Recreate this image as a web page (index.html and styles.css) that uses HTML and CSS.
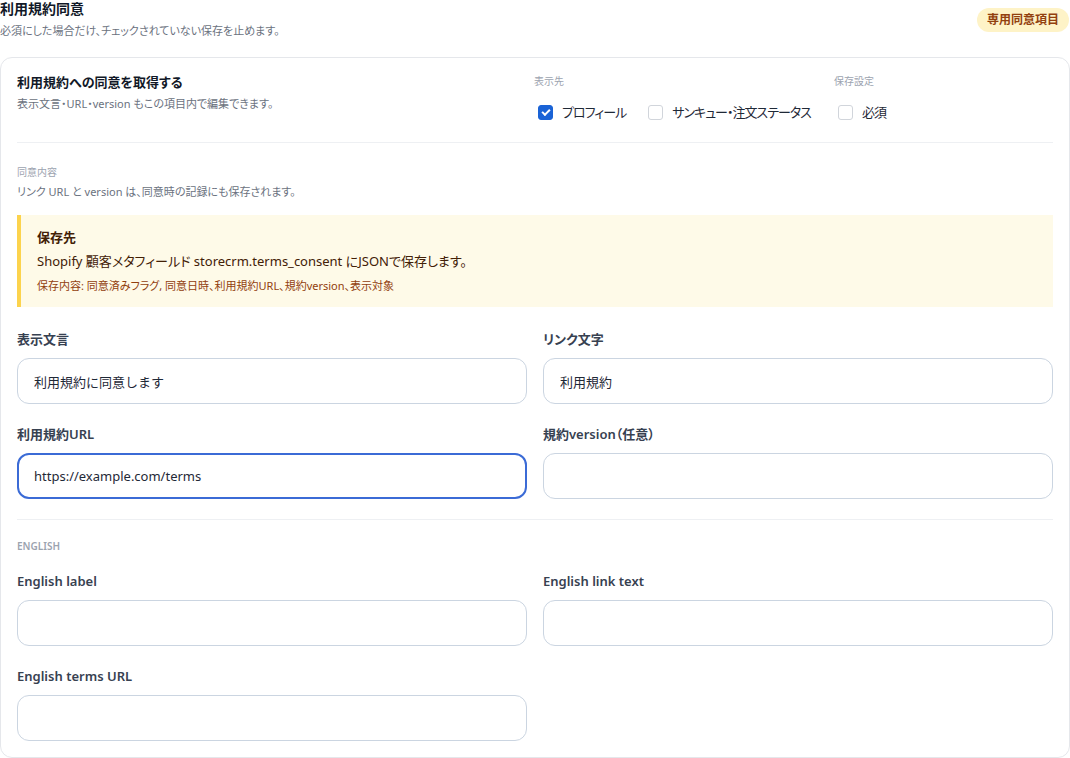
FILE: index.html
```html
<!DOCTYPE html>
<html lang="ja">
  <head>
    <meta charset="UTF-8" />
    <meta name="viewport" content="width=device-width, initial-scale=1.0" />
    <title>利用規約同意</title>
    <link rel="stylesheet" href="styles.css">
  </head>
  <body>
    <div class="section-head">
      <div>
        <h2>利用規約同意</h2>
        <p>必須にした場合だけ、チェックされていない保存を止めます。</p>
      </div>
      <span class="badge">専用同意項目</span>
    </div>

    <div class="card">
      <div class="card-top">
        <div class="card-intro">
          <h3>利用規約への同意を取得する</h3>
          <p>表示文言・URL・version もこの項目内で編集できます。</p>
        </div>
        <div class="opt-group opt-display">
          <div class="group-label">表示先</div>
          <div class="opt-row">
            <label class="check"><input type="checkbox" checked /><span>プロフィール</span></label>
            <label class="check"><input type="checkbox" /><span>サンキュー・注文ステータス</span></label>
          </div>
        </div>
        <div class="opt-group opt-save">
          <div class="group-label">保存設定</div>
          <div class="opt-row">
            <label class="check"><input type="checkbox" /><span>必須</span></label>
          </div>
        </div>
      </div>

      <div class="block">
        <div class="block-label">同意内容</div>
        <p class="block-desc">リンク URL と version は、同意時の記録にも保存されます。</p>

        <div class="notice">
          <strong>保存先</strong>
          <p>Shopify 顧客メタフィールド storecrm.terms_consent にJSONで保存します。</p>
          <small>保存内容: 同意済みフラグ, 同意日時、利用規約URL、規約version、表示対象</small>
        </div>

        <div class="form-grid">
          <div class="field">
            <label>表示文言</label>
            <input type="text" value="利用規約に同意します" />
          </div>
          <div class="field">
            <label>リンク文字</label>
            <input type="text" value="利用規約" />
          </div>
          <div class="field">
            <label>利用規約URL</label>
            <input type="text" class="focused" value="https://example.com/terms" />
          </div>
          <div class="field">
            <label>規約version（任意）</label>
            <input type="text" value="" />
          </div>
        </div>
      </div>

      <div class="block block-en">
        <div class="block-label upper">English</div>
        <div class="form-grid">
          <div class="field">
            <label>English label</label>
            <input type="text" value="" />
          </div>
          <div class="field">
            <label>English link text</label>
            <input type="text" value="" />
          </div>
          <div class="field">
            <label>English terms URL</label>
            <input type="text" value="" />
          </div>
        </div>
      </div>
    </div>
  </body>
</html>
```

FILE: styles.css
```css
* {
  margin: 0;
  padding: 0;
  box-sizing: border-box;
}

body {
  font-family: "Noto Sans", "Noto Sans CJK JP", sans-serif;
  font-feature-settings: "palt";
  background: #ffffff;
  color: #1f2937;
  width: 1070px;
}

.section-head {
  display: flex;
  justify-content: space-between;
  align-items: flex-start;
  height: 57px;
}

.section-head h2 {
  font-size: 14px;
  font-weight: 700;
  color: #111827;
  line-height: 18px;
}

.section-head p {
  font-size: 11px;
  color: #6b7280;
  margin-top: 5px;
  line-height: 16px;
}

.badge {
  margin-top: 8px;
  margin-right: 1px;
  background: #fef3c7;
  color: #92400e;
  font-size: 12px;
  font-weight: 700;
  padding: 3px 10px;
  border-radius: 12px;
  line-height: 18px;
}

.card {
  border: 1px solid #e5e7eb;
  border-radius: 12px;
  padding: 15px 16px 16px;
  height: 701px;
}

.card-top {
  display: flex;
  padding-bottom: 14px;
  border-bottom: 1px solid #eef0f3;
  height: 70px;
}

.card-intro {
  flex: 1;
}

.card-intro h3 {
  font-size: 13px;
  font-weight: 700;
  color: #111827;
  line-height: 18px;
}

.card-intro p {
  font-size: 11px;
  color: #6b7280;
  margin-top: 5px;
  line-height: 16px;
}

.opt-display {
  width: 300px;
}

.opt-save {
  width: 219px;
}

.group-label {
  font-size: 10px;
  color: #9ca3af;
  line-height: 16px;
}

.opt-row {
  display: flex;
  gap: 22px;
  margin-top: 15px;
  padding-left: 4px;
}

.check {
  display: flex;
  align-items: center;
  gap: 9px;
  font-size: 13px;
  color: #1f2937;
  line-height: 16px;
  white-space: nowrap;
}

.check span {
  letter-spacing: -1px;
}

.check input {
  appearance: none;
  flex-shrink: 0;
  width: 15px;
  height: 15px;
  border: 1px solid #d1d5db;
  border-radius: 3px;
  background: #fff;
  position: relative;
}

.check input:checked {
  background: #1a63d6;
  border-color: #1a63d6;
}

.check input:checked::after {
  content: "";
  position: absolute;
  left: 3px;
  top: 3px;
  width: 6px;
  height: 3px;
  border-left: 2px solid #fff;
  border-bottom: 2px solid #fff;
  transform: rotate(-45deg);
}

.block {
  padding-top: 22px;
  padding-bottom: 20px;
  border-bottom: 1px solid #eef0f3;
}

.block-label {
  font-size: 10px;
  color: #9ca3af;
  line-height: 14px;
}

.block-label.upper {
  text-transform: uppercase;
  font-weight: 600;
}

.block-desc {
  font-size: 11px;
  color: #6b7280;
  margin-top: 5px;
  line-height: 16px;
}

.notice {
  margin-top: 15px;
  background: #fefae8;
  border-left: 4px solid #fcd34d;
  padding: 13px 16px 13px;
}

.notice strong {
  display: block;
  font-size: 13px;
  font-weight: 700;
  color: #422006;
  line-height: 18px;
}

.notice p {
  font-size: 13px;
  color: #422006;
  margin-top: 6px;
  line-height: 18px;
}

.notice small {
  display: block;
  font-size: 11px;
  color: #92400e;
  margin-top: 8px;
  line-height: 16px;
}

.form-grid {
  display: grid;
  grid-template-columns: 1fr 1fr;
  column-gap: 16px;
  row-gap: 21px;
  margin-top: 23px;
}

.block-en {
  border-bottom: none;
  padding-top: 19px;
}

.block-en .form-grid {
  margin-top: 19px;
}

.field label {
  display: block;
  font-size: 13px;
  font-weight: 600;
  color: #374151;
  line-height: 18px;
  margin-bottom: 10px;
}

.field input {
  width: 100%;
  height: 46px;
  border: 1px solid #cbd5e1;
  border-radius: 12px;
  padding: 0 16px;
  font-family: inherit;
  font-size: 13px;
  color: #1f2937;
  background: #fff;
  outline: none;
}

.field input.focused {
  border: 2px solid #3b6bd6;
  padding: 0 15px;
}
```
